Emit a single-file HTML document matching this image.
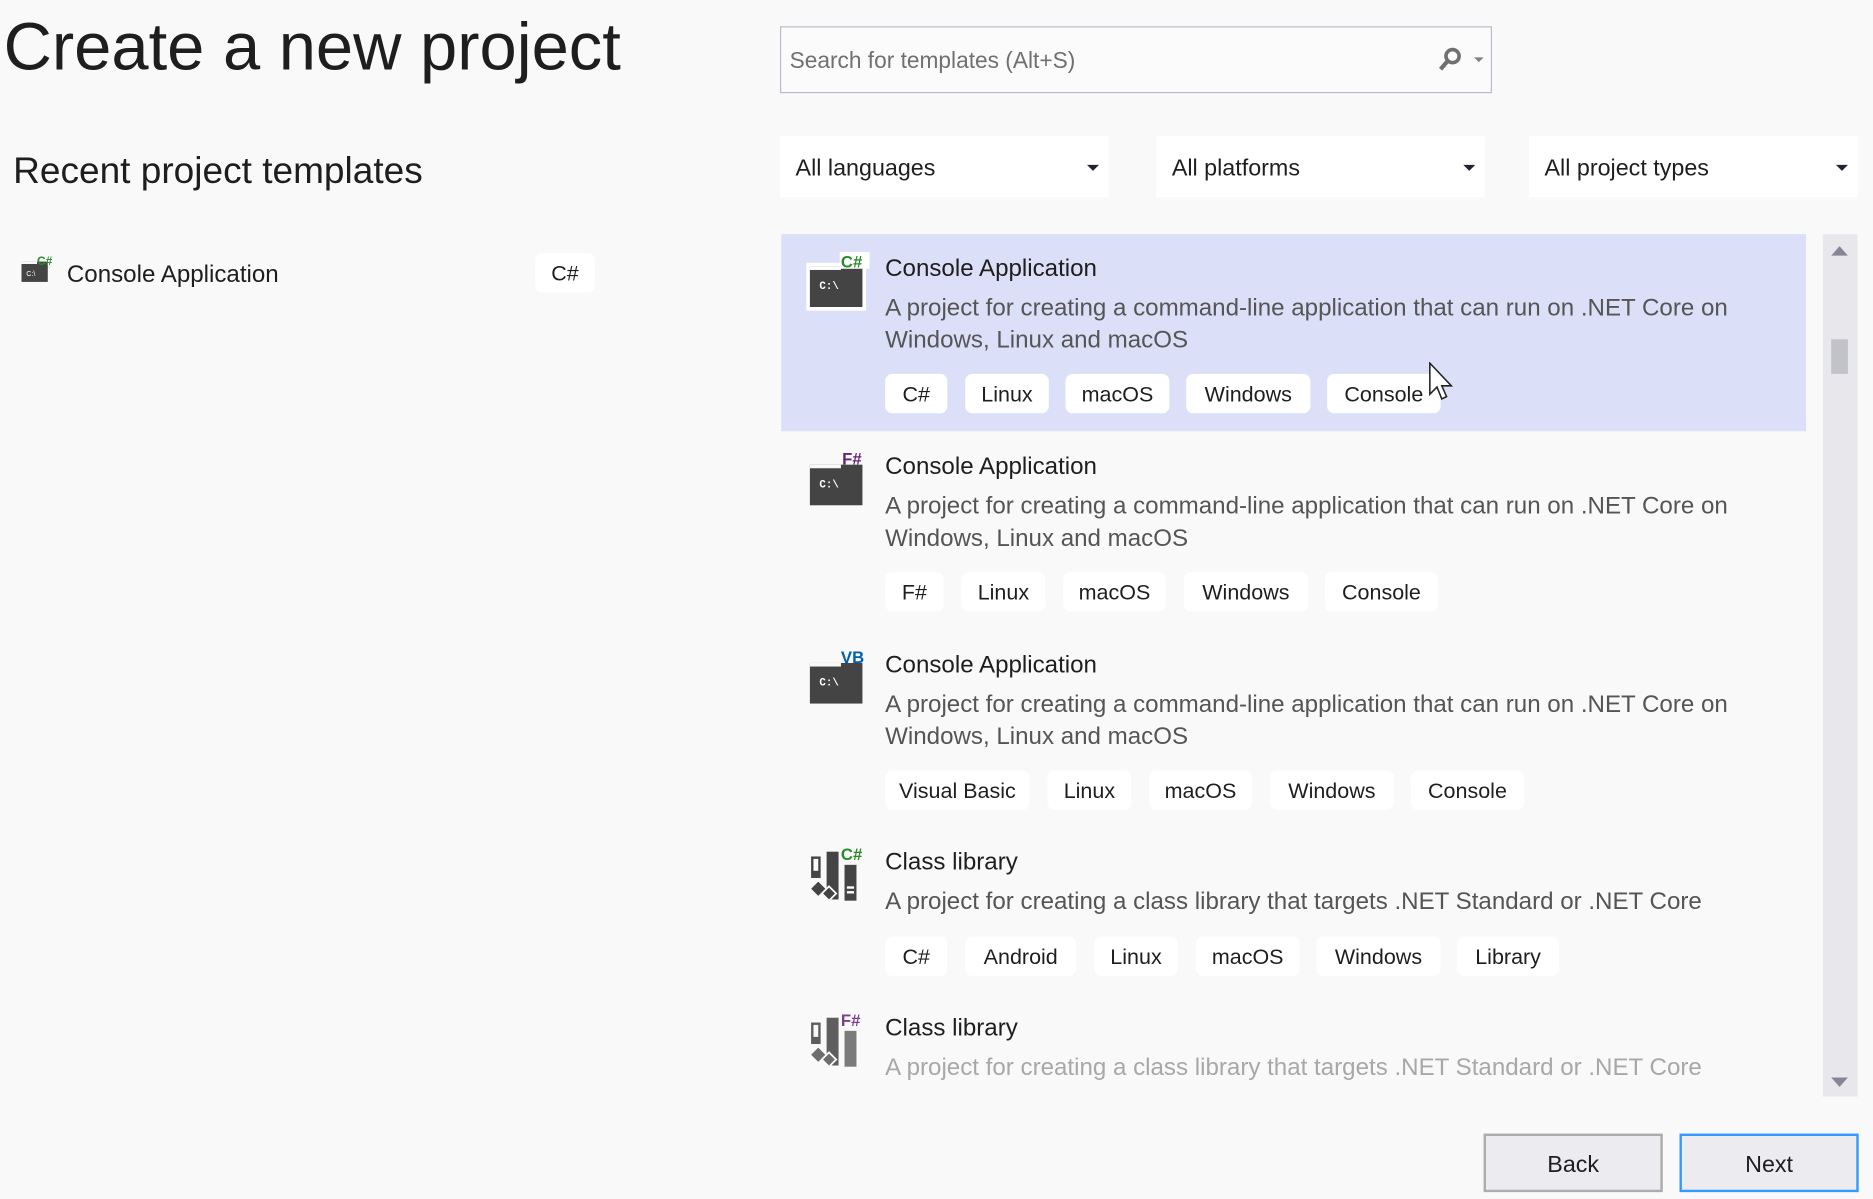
<!DOCTYPE html>
<html><head><meta charset="utf-8"><style>
html,body{margin:0;padding:0;background:#f9f9f9;overflow:hidden}
body{width:1873px;height:1199px;position:relative}
#s{position:absolute;left:0;top:0;width:1568px;height:1004px;transform:scale(1.19452);transform-origin:0 0;font-family:"Liberation Sans",sans-serif;color:#1e1e1e}
.a{position:absolute;white-space:nowrap}
.tag{position:absolute;height:33px;line-height:35px;background:#fff;border-radius:6px;font-size:18px;text-align:center;color:#1e1e1e}
.dd{position:absolute;top:114px;height:51px;background:#fff;font-size:19.5px;line-height:55px}
.dd span{position:absolute;left:13px}
.dd i{position:absolute;right:8px;top:24px;width:0;height:0;border-left:5px solid transparent;border-right:5px solid transparent;border-top:5px solid #1e2233}
.t{font-size:20.2px;color:#1e1e1e}
.d{font-size:20.2px;color:#555;line-height:26.5px}
.btn{position:absolute;top:949px;width:146px;height:45px;background:#ececf0;border:2px solid #acacac;font-size:19.5px;text-align:center;line-height:49px}
</style></head><body><div id="s">
<div class="a" style="left:3px;top:6px;font-size:56px;color:#1e1e1e">Create a new project</div>
<div class="a" style="left:11px;top:125px;font-size:31px">Recent project templates</div>
<svg class="a" style="left:17px;top:213px" width="28" height="26" viewBox="0 0 28 26"><rect x="1" y="6" width="22" height="17" fill="#444"/><rect x="1" y="6" width="13" height="2" fill="#f9f9f9"/><text x="5" y="18" font-size="6" fill="#fff" font-family="Liberation Sans">C:\</text><text x="14" y="9" font-size="10" font-weight="bold" fill="#2a8a2a" font-family="Liberation Sans">C#</text></svg>
<div class="a t" style="left:56px;top:219px">Console Application</div>
<div class="tag" style="left:448px;top:212px;width:50px">C#</div>

<div class="a" style="left:653px;top:22px;width:594px;height:54px;border:1px solid #b4bccc;background:#fbfbfb"></div>
<div class="a" style="left:661px;top:41px;font-size:19px;color:#707070">Search for templates (Alt+S)</div>
<svg class="a" style="left:1202px;top:38px" width="44" height="26"><circle cx="14" cy="9" r="5.5" fill="none" stroke="#707070" stroke-width="3"/><line x1="10" y1="13" x2="4" y2="20" stroke="#707070" stroke-width="3.5"/><path d="M32 10 L40 10 L36 14Z" fill="#808080"/></svg>

<div class="dd" style="left:653px;width:275px"><span>All languages</span><i></i></div>
<div class="dd" style="left:968px;width:275px"><span>All platforms</span><i></i></div>
<div class="dd" style="left:1280px;width:275px"><span>All project types</span><i></i></div>

<div class="a" style="left:654px;top:196px;width:858px;height:165px;background:#dbe0f8"></div>

<svg class="a" style="left:674px;top:211px" width="54" height="50"><rect x="1" y="9" width="50" height="40" fill="#fff"/><rect x="4" y="12" width="44" height="34" fill="#444"/><rect x="4" y="12" width="26" height="3" fill="#fff"/><text x="12" y="31" font-size="9" font-weight="bold" fill="#fff" font-family="Liberation Mono">C:\</text><rect x="29" y="0" width="25" height="14" fill="#fff"/><text x="30" y="13" font-size="14" font-weight="bold" fill="#2a8a2a" font-family="Liberation Sans">C#</text></svg>
<div class="a t" style="left:741px;top:214px">Console Application</div>
<div class="a d" style="left:741px;top:245px">A project for creating a command-line application that can run on .NET Core on<br>Windows, Linux and macOS</div>
<div class="tag" style="left:741px;top:313px;width:52px">C#</div>
<div class="tag" style="left:808px;top:313px;width:70px">Linux</div>
<div class="tag" style="left:892px;top:313px;width:87px">macOS</div>
<div class="tag" style="left:993px;top:313px;width:104px">Windows</div>
<div class="tag" style="left:1111px;top:313px;width:95px">Console</div>
<svg class="a" style="left:1195px;top:303px" width="22" height="34"><path d="M2 1 L2 27 L8 21 L12 31 L16 29 L12 20 L20 20 Z" fill="#fff" stroke="#222" stroke-width="1.3"/></svg>

<svg class="a" style="left:674px;top:377px" width="54" height="50"><rect x="4" y="12" width="44" height="34" fill="#444"/><rect x="4" y="12" width="26" height="3" fill="#f9f9f9"/><text x="12" y="31" font-size="9" font-weight="bold" fill="#fff" font-family="Liberation Mono">C:\</text><text x="31" y="12" font-size="14" font-weight="bold" fill="#68217a" font-family="Liberation Sans">F#</text></svg>
<div class="a t" style="left:741px;top:380px">Console Application</div>
<div class="a d" style="left:741px;top:411px">A project for creating a command-line application that can run on .NET Core on<br>Windows, Linux and macOS</div>
<div class="tag" style="left:741px;top:479px;width:49px">F#</div>
<div class="tag" style="left:805px;top:479px;width:70px">Linux</div>
<div class="tag" style="left:890px;top:479px;width:86px">macOS</div>
<div class="tag" style="left:991px;top:479px;width:104px">Windows</div>
<div class="tag" style="left:1109px;top:479px;width:95px">Console</div>

<svg class="a" style="left:674px;top:543px" width="54" height="50"><rect x="4" y="12" width="44" height="34" fill="#444"/><rect x="4" y="12" width="26" height="3" fill="#f9f9f9"/><text x="12" y="31" font-size="9" font-weight="bold" fill="#fff" font-family="Liberation Mono">C:\</text><text x="30" y="12" font-size="14" font-weight="bold" fill="#0060b0" font-family="Liberation Sans">VB</text></svg>
<div class="a t" style="left:741px;top:546px">Console Application</div>
<div class="a d" style="left:741px;top:577px">A project for creating a command-line application that can run on .NET Core on<br>Windows, Linux and macOS</div>
<div class="tag" style="left:741px;top:645px;width:121px">Visual Basic</div>
<div class="tag" style="left:877px;top:645px;width:70px">Linux</div>
<div class="tag" style="left:962px;top:645px;width:86px">macOS</div>
<div class="tag" style="left:1063px;top:645px;width:104px">Windows</div>
<div class="tag" style="left:1181px;top:645px;width:95px">Console</div>

<svg class="a" style="left:676px;top:708px" width="50" height="50"><rect x="3" y="9" width="8" height="18" fill="#444"/><rect x="5" y="11" width="4" height="10" fill="#f9f9f9"/><rect x="16" y="5" width="10" height="40" fill="#444"/><rect x="31" y="16" width="10" height="30" fill="#444"/><rect x="33" y="34" width="6" height="2" fill="#fff"/><rect x="33" y="38" width="6" height="2" fill="#fff"/><path d="M2 36 L9 29 L16 36 L9 43Z M12 40 L18 34 L24 40 L18 46Z" fill="#444" stroke="#f9f9f9" stroke-width="1.5"/><text x="28" y="12" font-size="14" font-weight="bold" fill="#2a8a2a" font-family="Liberation Sans">C#</text></svg>
<div class="a t" style="left:741px;top:711px">Class library</div>
<div class="a d" style="left:741px;top:742px">A project for creating a class library that targets .NET Standard or .NET Core</div>
<div class="tag" style="left:741px;top:784px;width:52px">C#</div>
<div class="tag" style="left:808px;top:784px;width:93px">Android</div>
<div class="tag" style="left:916px;top:784px;width:70px">Linux</div>
<div class="tag" style="left:1001px;top:784px;width:87px">macOS</div>
<div class="tag" style="left:1102px;top:784px;width:104px">Windows</div>
<div class="tag" style="left:1220px;top:784px;width:85px">Library</div>

<svg class="a" style="left:676px;top:847px" width="50" height="50" opacity="0.85"><rect x="3" y="9" width="8" height="18" fill="#444"/><rect x="5" y="11" width="4" height="10" fill="#f9f9f9"/><rect x="16" y="5" width="10" height="40" fill="#444"/><rect x="31" y="16" width="10" height="30" fill="#666"/><path d="M2 36 L9 29 L16 36 L9 43Z M12 40 L18 34 L24 40 L18 46Z" fill="#555" stroke="#f9f9f9" stroke-width="1.5"/><text x="28" y="12" font-size="14" font-weight="bold" fill="#68217a" font-family="Liberation Sans">F#</text></svg>
<div class="a t" style="left:741px;top:850px">Class library</div>
<div class="a d" style="left:741px;top:881px;color:#a8a8a8">A project for creating a class library that targets .NET Standard or .NET Core</div>

<div class="a" style="left:1526px;top:196px;width:29px;height:722px;background:#e8e8ec"></div>
<div class="a" style="left:1533px;top:206px;width:0;height:0;border-left:7px solid transparent;border-right:7px solid transparent;border-bottom:8px solid #868699"></div>
<div class="a" style="left:1533px;top:284px;width:14px;height:29px;background:#c2c3c9"></div>
<div class="a" style="left:1533px;top:902px;width:0;height:0;border-left:7px solid transparent;border-right:7px solid transparent;border-top:8px solid #868699"></div>

<div class="btn" style="left:1242px">Back</div>
<div class="btn" style="left:1406px;border-color:#3399ff">Next</div>
</div></body></html>
